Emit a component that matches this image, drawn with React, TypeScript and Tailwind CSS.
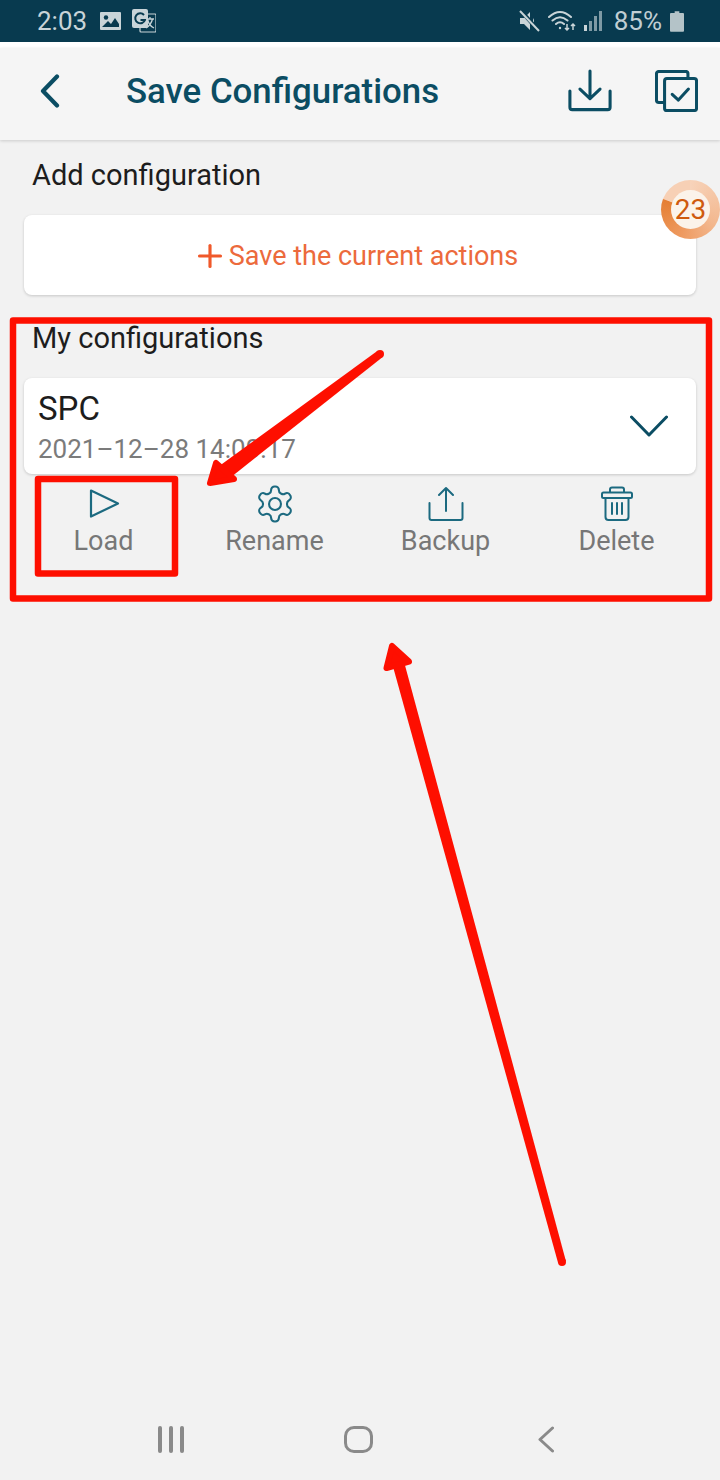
import React from "react";
import { Plus } from "lucide-react";

const teal = "#0b4d63";

const Actions = [
  {
    label: "Load",
    icon: (
      <svg width="32" height="32" viewBox="0 0 32 32" fill="none" stroke="#1c6a80" strokeWidth="2.2" strokeLinejoin="round">
        <path d="M3 3.5 L30 16.5 L3 29.5 Z" transform="translate(0 -1)" />
      </svg>
    ),
  },
  {
    label: "Rename",
    icon: (
      <svg width="42" height="42" viewBox="0 0 24 24" fill="none" stroke="#1c6a80" strokeWidth="1.2" strokeLinejoin="round">
        <path d="M12.22 2h-.44a2 2 0 0 0-2 2v.18a2 2 0 0 1-1 1.73l-.43.25a2 2 0 0 1-2 0l-.15-.08a2 2 0 0 0-2.73.73l-.22.38a2 2 0 0 0 .73 2.73l.15.1a2 2 0 0 1 1 1.72v.51a2 2 0 0 1-1 1.74l-.15.09a2 2 0 0 0-.73 2.73l.22.38a2 2 0 0 0 2.73.73l.15-.08a2 2 0 0 1 2 0l.43.25a2 2 0 0 1 1 1.73V20a2 2 0 0 0 2 2h.44a2 2 0 0 0 2-2v-.18a2 2 0 0 1 1-1.73l.43-.25a2 2 0 0 1 2 0l.15.08a2 2 0 0 0 2.73-.73l.22-.39a2 2 0 0 0-.73-2.73l-.15-.08a2 2 0 0 1-1-1.74v-.5a2 2 0 0 1 1-1.74l.15-.09a2 2 0 0 0 .73-2.73l-.22-.38a2 2 0 0 0-2.73-.73l-.15.08a2 2 0 0 1-2 0l-.43-.25a2 2 0 0 1-1-1.73V4a2 2 0 0 0-2-2z" />
        <circle cx="12" cy="12" r="3.4" />
      </svg>
    ),
  },
  {
    label: "Backup",
    icon: (
      <svg width="36" height="36" viewBox="0 0 36 36" fill="none" stroke="#1c6a80" strokeWidth="2" strokeLinecap="round" strokeLinejoin="round">
        <path d="M18 25 V2 M11 9 L18 2 L25 9" />
        <path d="M1.5 17 V32 A2 2 0 0 0 3.5 34 H32.5 A2 2 0 0 0 34.5 32 V17" />
      </svg>
    ),
  },
  {
    label: "Delete",
    icon: (
      <svg width="32" height="36" viewBox="0 0 32 36" fill="none" stroke="#1c6a80" strokeWidth="2" strokeLinecap="round" strokeLinejoin="round">
        <rect x="1" y="6.5" width="30" height="5.5" rx="1.5" />
        <path d="M9 6 V3.5 A2 2 0 0 1 11 1.5 H21 A2 2 0 0 1 23 3.5 V6" />
        <path d="M4.5 12 V31 A3 3 0 0 0 7.5 34 H24.5 A3 3 0 0 0 27.5 31 V12" />
        <path d="M11 17 V28 M16 17 V28 M21 17 V28" />
      </svg>
    ),
  },
];

function StatusBar() {
  return (
    <div className="flex h-[42px] items-center justify-between bg-[#083a4f] pl-[37px] pr-[36px]">
      <div className="flex items-center">
        <span className="text-[26px] leading-none text-[#c9d4d8]">2:03</span>
        <svg className="ml-[13px]" width="21" height="18" viewBox="0 0 21 18">
          <rect width="21" height="18" rx="1" fill="#c9d4d8" />
          <circle cx="6" cy="5.5" r="2.2" fill="#083a4f" />
          <path d="M2 15 L8 9 L11 12 L15 6 L19 12 V15 Z" fill="#083a4f" />
        </svg>
        <svg className="ml-[11px]" width="24" height="24" viewBox="0 0 24 24">
          <rect x="8" y="5" width="16" height="18" rx="1" fill="#083a4f" stroke="#c9d4d8" strokeWidth="1.2" />
          <rect x="0" y="0" width="16" height="19" rx="2" fill="#c9d4d8" />
          <path d="M12 6 A5 5 0 1 0 13 11 H8.5" fill="none" stroke="#083a4f" strokeWidth="2" />
          <path d="M14 10 H22 M18 8 V10 M15.5 10 Q17 17 22 19 M20.5 10 Q19 16 14 19" fill="none" stroke="#c9d4d8" strokeWidth="1.3" />
        </svg>
      </div>
      <div className="flex items-center">
        <svg width="21" height="22" viewBox="0 0 21 22">
          <path d="M1 8 H5 L11 2 V20 L5 14 H1 Z M14 8 Q16 11 14 14" fill="#c9d4d8" />
          <path d="M2 1 L20 21" stroke="#083a4f" strokeWidth="4" />
          <path d="M1 1 L20 21" stroke="#c9d4d8" strokeWidth="2" />
        </svg>
        <svg className="ml-[8px]" width="28" height="22" viewBox="0 0 28 22" fill="none" stroke="#c9d4d8" strokeWidth="2" strokeLinecap="round">
          <path d="M1 7 Q12 -3 23 7 M4.5 10.5 Q12 4 19.5 10.5 M8 14 Q12 10.5 16 14" />
          <circle cx="12" cy="18" r="1.2" fill="#c9d4d8" stroke="none" />
          <path d="M19 14 V20 M17 18 L19 20 L21 18 M25 20 V14 M23 16 L25 14 L27 16" strokeWidth="1.5" strokeLinecap="butt" />
        </svg>
        <div className="ml-[8px] flex h-[20px] items-end gap-[2px]">
          <div className="h-[6px] w-[3px] bg-[#c9d4d8]" />
          <div className="h-[10px] w-[3px] bg-[#7f9aa5]" />
          <div className="h-[15px] w-[3px] bg-[#7f9aa5]" />
          <div className="h-[20px] w-[3px] bg-[#7f9aa5]" />
        </div>
        <span className="ml-[12px] text-[26px] leading-none text-[#c0ced3]">85%</span>
        <svg className="ml-[8px]" width="14" height="21" viewBox="0 0 15 22">
          <path d="M5 0 H10 V2 H14 A1 1 0 0 1 15 3 V21 A1 1 0 0 1 14 22 H1 A1 1 0 0 1 0 21 V3 A1 1 0 0 1 1 2 H5 Z" fill="#b4c3c8" />
        </svg>
      </div>
    </div>
  );
}

function Header() {
  return (
    <div className="relative flex h-[92px] items-center bg-[#f5f5f5] pb-[6px] shadow-[0_1px_3px_rgba(0,0,0,0.16)]">
      <svg className="ml-[40px]" width="20" height="34" viewBox="0 0 20 34" fill="none" stroke={teal} strokeWidth="4.2" strokeLinecap="round" strokeLinejoin="round">
        <path d="M17 2.5 L3 17 L17 31.5" />
      </svg>
      <h1 className="ml-[66px] text-[34.8px] font-medium leading-none text-[#0b4d63]">Save Configurations</h1>
      <div className="ml-auto mr-[22px] flex items-center gap-[43px]">
        <svg width="44" height="46" viewBox="0 0 46 46" fill="none" stroke={teal} strokeWidth="3.2" strokeLinecap="round" strokeLinejoin="round">
          <path d="M23 2 V31 M12.5 21 L23 31 L33.5 21" />
          <path d="M2 23 V40 A2.5 2.5 0 0 0 4.5 42.5 H41.5 A2.5 2.5 0 0 0 44 40 V23" />
        </svg>
        <svg width="43" height="42" viewBox="0 0 45 44" fill="none" stroke={teal} strokeWidth="3.2" strokeLinecap="round" strokeLinejoin="round">
          <path d="M9 34 H4 A2.5 2.5 0 0 1 1.5 31.5 V4 A2.5 2.5 0 0 1 4 1.5 H32 A2.5 2.5 0 0 1 34.5 4 V9" />
          <rect x="10" y="9" width="33.5" height="33.5" rx="2.5" />
          <path d="M18 25.5 L24.5 31.5 L35 20" />
        </svg>
      </div>
    </div>
  );
}

function Timer() {
  return (
    <div className="absolute right-0 top-[180px] flex h-[59px] w-[59px] items-center justify-center rounded-full bg-[conic-gradient(#f7d3ba_0deg,#f3b88f_120deg,#ee9a60_200deg,#e57f33_290deg,#f7d0b5_292deg)]">
      <div className="flex h-[39px] w-[39px] items-center justify-center rounded-full bg-[#fbf3ea] text-[28px] leading-none text-[#cf5a0e]">23</div>
    </div>
  );
}

function NavBar() {
  return (
    <div className="mt-auto flex h-[80px] items-start pl-[158px] pt-[26px]">
      <div className="flex h-[27px] gap-[7px]">
        <div className="w-[4px] rounded-full bg-[#8a8a8a]" />
        <div className="w-[4px] rounded-full bg-[#8a8a8a]" />
        <div className="w-[4px] rounded-full bg-[#8a8a8a]" />
      </div>
      <div className="ml-[160px] h-[27px] w-[29px] rounded-[10px] border-[3px] border-[#8a8a8a]" />
      <svg className="ml-[165px]" width="16" height="27" viewBox="0 0 16 27" fill="none" stroke="#8a8a8a" strokeWidth="3" strokeLinecap="round" strokeLinejoin="round">
        <path d="M14.5 2 L2 13.5 L14.5 25" />
      </svg>
    </div>
  );
}

// red markup drawn on top of the screenshot
function Annotations() {
  return (
    <svg className="pointer-events-none absolute left-0 top-0" width="720" height="1480" viewBox="0 0 720 1480" fill="none">
      <rect x="13" y="320.5" width="696" height="278" stroke="#fe0f00" strokeWidth="6.5" strokeLinejoin="round" />
      <rect x="38" y="479" width="137" height="94.5" stroke="#fe0f00" strokeWidth="6.5" strokeLinejoin="round" />
      <path d="M382.4 357.2 L377.6 350.8 L217.2 467.6 L226.8 480.4 Z" fill="#fe0f00" />
      <circle cx="380" cy="354" r="4" fill="#fe0f00" />
      <path d="M216 463 L210 483 L234 479 Z" fill="#fe0f00" stroke="#fe0f00" strokeWidth="6" strokeLinejoin="round" />
      <path d="M390.2 656.6 L401.8 653.4 L565.9 1261 L558.1 1263 Z" fill="#fe0f00" />
      <circle cx="562" cy="1262" r="4" fill="#fe0f00" />
      <path d="M392 646 L386.5 668 L409 661.5 Z" fill="#fe0f00" stroke="#fe0f00" strokeWidth="6" strokeLinejoin="round" />
    </svg>
  );
}

export default function App() {
  return (
    <div className="relative flex h-[1480px] w-[720px] flex-col overflow-hidden bg-[#f2f2f2] font-['Roboto',sans-serif]">
      <StatusBar />
      <div className="h-[6px] bg-white" />
      <Header />
      <div className="px-[24px]">
        <div className="mt-[19px] pl-[8px] text-[29px] leading-[33px] text-[#1d1d1d]">Add configuration</div>
        <button className="mt-[23px] flex h-[80px] w-full items-center justify-center rounded-[8px] bg-white pr-[10px] pt-[2px] shadow-[0_1px_3px_rgba(0,0,0,0.18)]">
          <Plus size={36} color="#f0592b" strokeWidth={2.1} />
          <span className="ml-[1px] text-[27px] leading-none text-[#ec6a3c]">Save the current actions</span>
        </button>
        <div className="mt-[27px] pl-[8px] text-[29px] leading-[33px] text-[#1d1d1d]">My configurations</div>
        <div className="mt-[23px] flex h-[96px] items-center justify-between rounded-[8px] bg-white pl-[14px] pr-[28px] shadow-[0_1px_3px_rgba(0,0,0,0.18)]">
          <div className="pt-[2px]">
            <div className="text-[33px] leading-[38px] text-[#1d1d1d]">SPC</div>
            <div className="mt-[5px] text-[26px] leading-[32px] text-[#7b7b7b]">2021–12–28 14:00:17</div>
          </div>
          <svg width="38" height="22" viewBox="0 0 38 22" fill="none" stroke={teal} strokeWidth="3" strokeLinecap="round" strokeLinejoin="round">
            <path d="M1.5 2 L19 20 L36.5 2" />
          </svg>
        </div>
        <div className="-mx-[6px] mt-[12px] grid grid-cols-4">
          {Actions.map((a) => (
            <div key={a.label} className="flex flex-col items-center">
              <div className="flex h-[36px] items-center justify-center">{a.icon}</div>
              <span className="mt-[3px] text-[27px] leading-[32px] text-[#777777]">{a.label}</span>
            </div>
          ))}
        </div>
      </div>
      <NavBar />
      <Timer />
      <Annotations />
    </div>
  );
}
